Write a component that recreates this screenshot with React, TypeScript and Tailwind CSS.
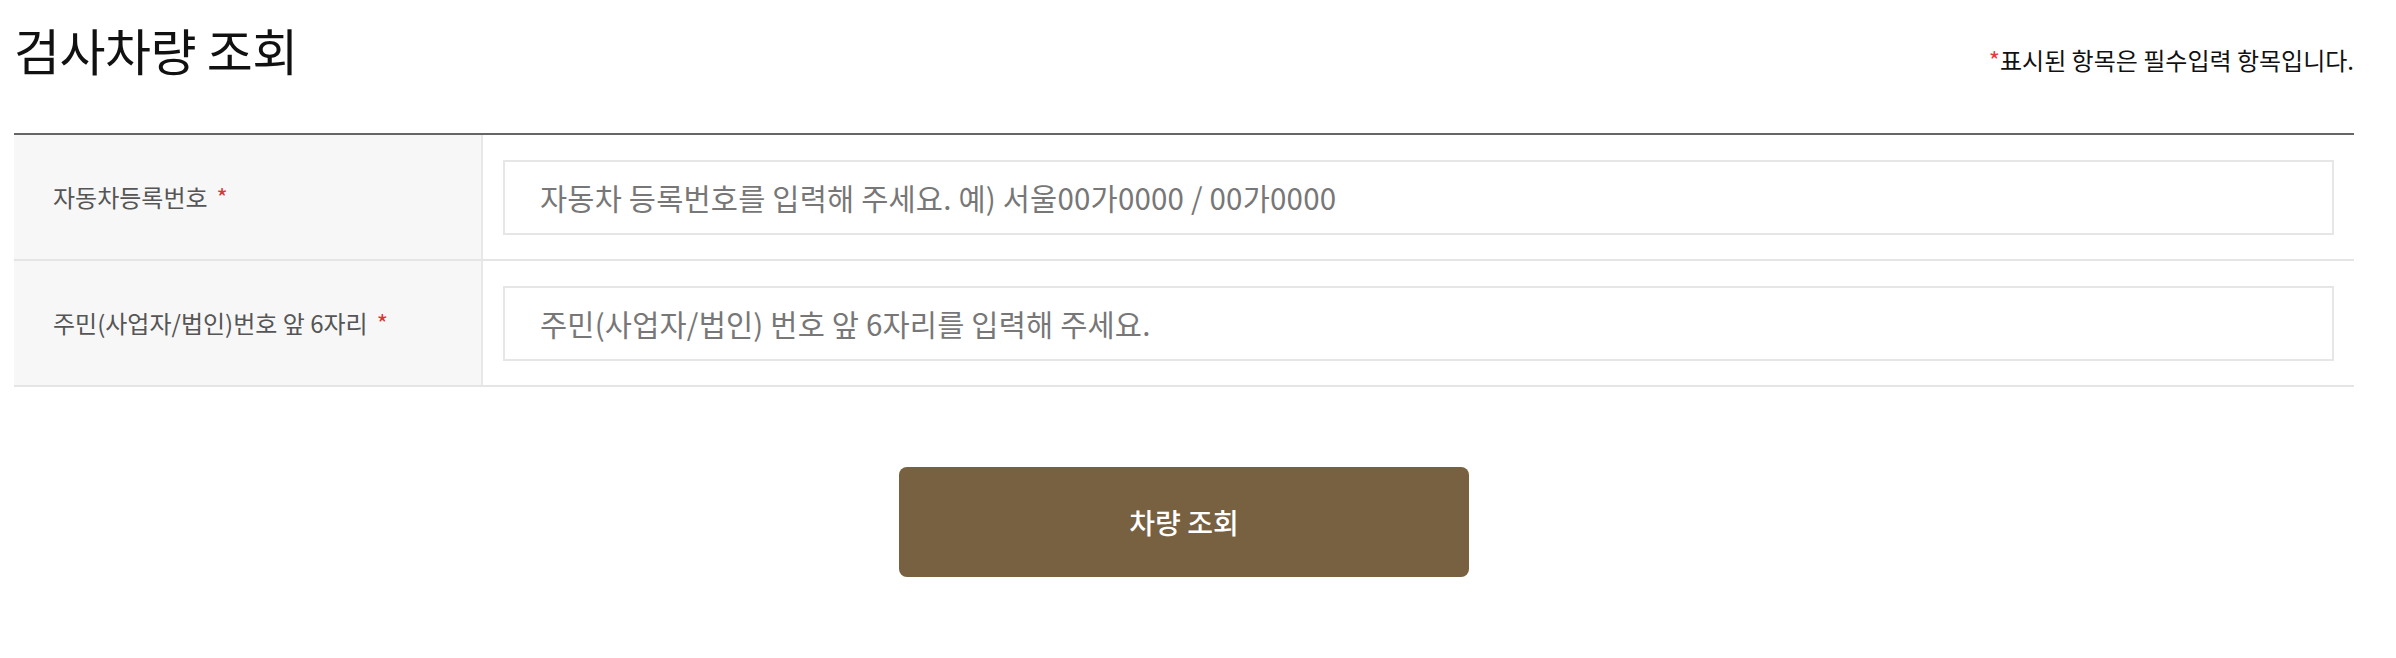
import React from "react";

export default function App() {
  const font = { fontFamily: '"Noto Sans CJK KR", "Noto Sans", sans-serif' };
  return (
    <div className="w-[2396px] min-h-[658px] bg-white pl-[14px] pr-[42px]" style={font}>
      <div className="flex items-end justify-between pt-[24px]">
        <h1 className="text-[50px] leading-none font-normal tracking-[-0.01em] text-[#111]">검사차량 조회</h1>
        <p className="text-[24px] leading-none tracking-normal text-[#111] pb-[2px]">
          <span className="text-[#e03c3c]">*</span>표시된 항목은 필수입력 항목입니다.
        </p>
      </div>
      <div className="mt-[59px] border-t-2 border-[#666]">
        <div className="flex border-b-2 border-[#e5e5e5]">
          <div className="flex w-[467px] items-center bg-[#f7f7f7] pl-[39px] text-[24px] text-[#555]">
            자동차등록번호<span className="ml-[9px] text-[#d33]">*</span>
          </div>
          <div className="flex-1 border-l-2 border-[#e8e8e8] px-[20px] pt-[25px] pb-[24px]">
            <div className="flex h-[75px] items-center border-2 border-[#e6e6e6] pl-[35px] text-[29.5px] tracking-[0.2px] text-[#777]">
              자동차 등록번호를 입력해 주세요. 예) 서울00가0000 / 00가0000
            </div>
          </div>
        </div>
        <div className="flex border-b-2 border-[#e5e5e5]">
          <div className="flex w-[467px] items-center bg-[#f7f7f7] pl-[39px] text-[24px] text-[#555]">
            주민(사업자/법인)번호 앞 6자리<span className="ml-[9px] text-[#d33]">*</span>
          </div>
          <div className="flex-1 border-l-2 border-[#e8e8e8] px-[20px] pt-[25px] pb-[24px]">
            <div className="flex h-[75px] items-center border-2 border-[#e6e6e6] pl-[35px] text-[29.5px] tracking-[0.2px] text-[#777]">
              주민(사업자/법인) 번호 앞 6자리를 입력해 주세요.
            </div>
          </div>
        </div>
      </div>
      <div className="flex justify-center pt-[80px]">
        <button className="flex h-[110px] w-[570px] items-center justify-center rounded-[8px] bg-[#776140] text-[28px] font-medium text-white">
          차량 조회
        </button>
      </div>
    </div>
  );
}
